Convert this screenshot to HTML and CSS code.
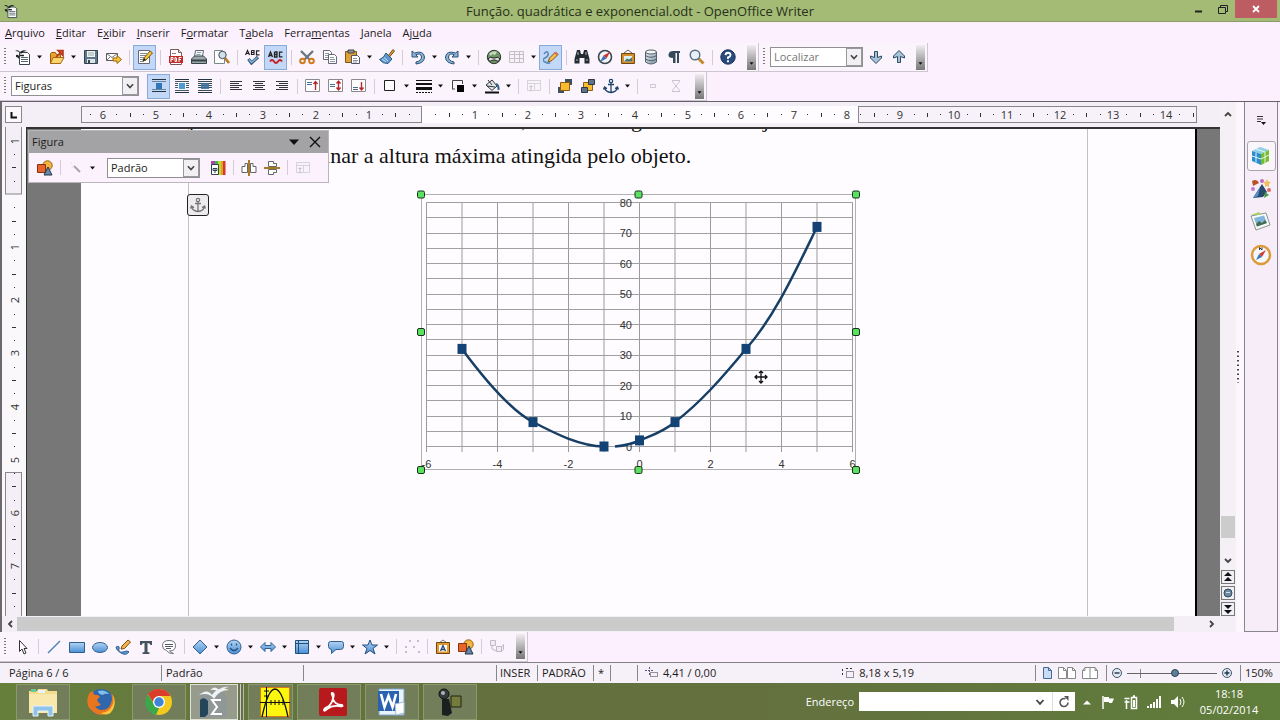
FILE: index.html
```html
<!DOCTYPE html>
<html lang="pt-BR">
<head>
<meta charset="utf-8">
<title>Função. quadrática e exponencial.odt - OpenOffice Writer</title>
<link rel="stylesheet" href="styles.css">
</head>
<body>
<svg class="sprite" aria-hidden="true">
  <defs>
    <linearGradient id="blue" x1="0" y1="0" x2="0" y2="1"><stop offset="0" stop-color="#b4d4f2"/><stop offset="1" stop-color="#4a8fd6"/></linearGradient>
    <linearGradient id="metal" x1="0" y1="0" x2="1" y2="1"><stop offset="0" stop-color="#e9eef2"/><stop offset="1" stop-color="#7a93a8"/></linearGradient>
  </defs>
  <symbol id="dd" viewBox="0 0 11 16"><path d="M3 6.500h5l-2.500 3z" fill="#111"/></symbol>
  <symbol id="chev" viewBox="0 0 16 16"><path d="M4.500 6 8 9.800 11.500 6" fill="none" stroke="#444" stroke-width="1.800"/></symbol>
  <symbol id="new" viewBox="0 0 16 16"><path d="M4.500 3.500h8l2 2v10h-10z" fill="#fff" stroke="#38444c"/><path d="M6 8.500h7M6 10.500h7M6 12.500h7" stroke="#56646c"/><path d="M5 6.500h4" stroke="#222" stroke-width="1.500"/><path d="M0 2q3-2 5 1 3-3 7-1-4 0-6 3-2-3-6-3zM1 6q2-1 3 1v3q-1-2-3-2z" fill="#20282c"/></symbol>
  <symbol id="open" viewBox="0 0 16 16"><path d="M1.500 14.500v-10l1-1h4l1 2h4v9z" fill="#e8a52c" stroke="#9a5c10"/><path d="M1.500 14.500 4 8.500h11l-3.500 6z" fill="#fbd46b" stroke="#a8681a"/><path d="M7 8 12 3M9 1.500h5v5z" stroke="#b5391c" stroke-width="1.600" fill="#dc5c2c"/></symbol>
  <symbol id="save" viewBox="0 0 16 16"><path d="M1.500 1.500h13v13h-13z" fill="#5f7889" stroke="#34444f"/><path d="M4 2h8v6H4z" fill="#eef4f2"/><path d="M5 4h6M5 6h6" stroke="#9aa"/><path d="M4 10h8v4H4z" fill="#dfe6ea"/><path d="M5 11h2v3H5z" fill="#34444f"/></symbol>
  <symbol id="mail" viewBox="0 0 16 16"><path d="M.5 4.500h11v7H.5z" fill="#fff" stroke="#5a5a5a"/><path d="m.5 4.500 5.500 4 5.500-4M.5 11.500 4 8" fill="none" stroke="#777"/><path d="M7 9h4V6.500L15.500 10.500 11 14.500V12H7z" fill="#f8c63c" stroke="#9a6410"/></symbol>
  <symbol id="edit" viewBox="0 0 16 16"><path d="M1.500 1.500h11v13h-11z" fill="#fff" stroke="#667"/><path d="M3 4.500h7M3 6.500h6M3 8.500h5M3 10.500h3M3 12.500h4" stroke="#7a8a98"/><path d="m6 12 1-3 6-7 2.500 2-6.500 7z" fill="#f6c63c" stroke="#7a5610"/><path d="m6 12 1-3 2 2z" fill="#222"/></symbol>
  <symbol id="pdf" viewBox="0 0 16 16"><path d="M2.500.5h8l3 3v12h-11z" fill="#fff" stroke="#7a5a5a"/><path d="M10.500.5v3h3" fill="#ddd" stroke="#7a5a5a"/><rect x="1" y="7" width="14" height="7" fill="#c22d2a"/><path d="M3 13V8.500h2v2H3M7 8.500v4h1.500V9zM11 13V8.500h2.500M11 10.500h2" fill="none" stroke="#fff"/><path d="M4 4.500h4" stroke="#a77"/></symbol>
  <symbol id="print" viewBox="0 0 16 16"><path d="M4.500 1.500h8l-1 6h-8z" fill="#f4f6f7" stroke="#667"/><path d="M6 3.500h4M5.500 5.500h4" stroke="#8aa"/><path d="m.5 10 3-3h9l3 3v4.500H.5z" fill="#9aa7ad" stroke="#39444a"/><path d="M1 10.500h14v2H1z" fill="#39444a"/></symbol>
  <symbol id="preview" viewBox="0 0 16 16"><path d="M.5 1.500h8l2 2v11H.5z" fill="#fff" stroke="#788"/><circle cx="8.500" cy="6" r="3.700" fill="#cfe2ea" stroke="#445"/><path d="m11 9 4 5" stroke="#b57a28" stroke-width="2.600"/></symbol>
  <symbol id="spell" viewBox="0 0 16 16"><path d="M.5 6 2.500 1.500 4.500 6M1 4.500h3M6.500 1.500v4h2.500v-2H7M9 3.500v-2H6.500M14.500 1.800H11.500v4h3" fill="none" stroke="#222" stroke-width="1.200"/><path d="m3.500 10 3 4L13 8" fill="none" stroke="#31577a" stroke-width="3.200"/><path d="m4 10.500 2.500 3 6-5" fill="none" stroke="#86b4da" stroke-width="1.400"/></symbol>
  <symbol id="auto" viewBox="0 0 16 16"><path d="M.5 8 2.500 3 4.500 8M1 6.500h3M6.500 3v5H9V5.500H7M9 5.500V3H6.500M14.500 3.200H11.500v4.600h3" fill="none" stroke="#222" stroke-width="1.300"/><path d="M2 12.500q2-3 4 0t4 0 4 0" fill="none" stroke="#c3202a" stroke-width="2"/></symbol>
  <symbol id="cut" viewBox="0 0 16 16"><path d="M2 2 11 11M14 2 5 11" stroke="#6a7680" stroke-width="2.400"/><circle cx="3.500" cy="12" r="2.300" fill="none" stroke="#d07a22" stroke-width="2"/><circle cx="12.500" cy="12" r="2.300" fill="none" stroke="#d07a22" stroke-width="2"/></symbol>
  <symbol id="copy" viewBox="0 0 16 16"><path d="M1.500 1.500h6l2 2v7h-8z" fill="#fff" stroke="#667"/><path d="M3 4.500h4M3 6.500h4M3 8.500h3" stroke="#8a98a4"/><path d="M6.500 5.500h6l2 2v7h-8z" fill="#fff" stroke="#667"/><path d="M8 8.500h4M8 10.500h5M8 12.500h5" stroke="#8a98a4"/></symbol>
  <symbol id="paste" viewBox="0 0 16 16"><path d="M.5 2.500h11v11H.5z" fill="#e0a033" stroke="#80551a"/><path d="M3 1h6v3H3z" fill="#8a949a" stroke="#444"/><path d="M6.500 6.500h6l2 2v6h-8z" fill="#fff" stroke="#556"/><path d="M8 9.500h4M8 11.500h5M8 13h4" stroke="#8a98a4"/></symbol>
  <symbol id="brush" viewBox="0 0 16 16"><path d="m9 7 5-6.500L15.500 2 10.500 8z" fill="#e09a3c" stroke="#7a4d14"/><path d="m7 4 6 6-4 4.500Q4 15 .5 10.500 5 9 7 4z" fill="#5e95cf" stroke="#2b557f"/><path d="m3 10 4 3M5 8.500l4 3.500" stroke="#cfe4f8"/></symbol>
  <symbol id="undo" viewBox="0 0 16 16"><path d="M2 2v6h6L5.800 5.800Q11 3.500 11.500 8q0 4-5.500 5v2q8.500-1 8.500-7Q13.500 1 4.500 4z" fill="#8db4d8" stroke="#2c5278"/></symbol>
  <symbol id="redo" viewBox="0 0 16 16"><path d="M14 2v6H8l2.200-2.200Q5 3.500 4.500 8q0 4 5.500 5v2Q1.500 14 1.500 8 2.500 1 11.500 4z" fill="#8db4d8" stroke="#2c5278"/></symbol>
  <symbol id="globe" viewBox="0 0 16 16"><circle cx="8" cy="8" r="6.700" fill="#6f9468" stroke="#29382b"/><path d="M3 5q4-4 8-2l-2 3-3-1-1 2z" fill="#c6dabb"/><path d="M2 10q2-3 5-1h2q3-2 5 1-1 3-3 2l-2-1H7l-2 1q-2 1-3-2z" fill="#dde2df" stroke="#222"/></symbol>
  <symbol id="table" viewBox="0 0 16 16"><path d="M.5 2.500h14v11H.5zM.5 5.500h14M.5 9.500h14M5.500 2.500v11M10.500 2.500v11" fill="#f6f2f8" stroke="#c5c0c8"/></symbol>
  <symbol id="draw" viewBox="0 0 16 16"><path d="M1 5q3-4 4-1t-3 5 0 4 5 .5" fill="none" stroke="#5587bd" stroke-width="1.500"/><path d="m5 13 1.500-4 6-6L15 5.500 9 11.500z" fill="#f4bd50" stroke="#7d5318"/><path d="m12.500 2.500 2.500 2.500-1.500 1.500L11 4z" fill="#d8705c"/></symbol>
  <symbol id="find" viewBox="0 0 16 16"><path d="M3 1h3l1 4h2l1-4h3l2.500 9v4.500h-5V9H5.500v5.500h-5V10z" fill="#252b30"/><path d="M2 11h2M12 11h2M4 3v3M12 3v3" stroke="#7d8a94" stroke-width="1.500"/></symbol>
  <symbol id="compass" viewBox="0 0 16 16"><circle cx="8" cy="8" r="6.500" fill="#f2f5f8" stroke="#3c464e" stroke-width="1.600"/><path d="m13 3-3.500 6.500-3-3z" fill="#cf2f2b"/><path d="m3 13 3.500-6.500 3 3z" fill="#3a70b5"/></symbol>
  <symbol id="gallery" viewBox="0 0 16 16"><path d="m4 4 4-3 4 3" fill="none" stroke="#665"/><path d="M1.500 4.500h13v10h-13z" fill="#d28f2b" stroke="#6e4712"/><path d="M4 7h8v5.500H4z" fill="#dfeef2"/><path d="m4 12.500 3-3 2 1 3-2v4z" fill="#4c7466"/></symbol>
  <symbol id="db" viewBox="0 0 16 16"><path d="M2.500 3v10q5.500 4 11 0V3" fill="url(#metal)" stroke="#555e64"/><ellipse cx="8" cy="3" rx="5.500" ry="2" fill="#f2f5f6" stroke="#555e64"/><path d="M2.500 6.500q5.500 3.500 11 0M2.500 10q5.500 3.500 11 0" fill="none" stroke="#555e64"/></symbol>
  <symbol id="pilcrow" viewBox="0 0 16 16"><path d="M7 9Q2 9 2.500 5.500 3 2 7 2h7v2h-1v10h-2V4H9.500v10H7z" fill="#35495a"/></symbol>
  <symbol id="zoom" viewBox="0 0 16 16"><path d="m9.500 9.500 5 5" stroke="#c18a2d" stroke-width="3"/><circle cx="6" cy="6" r="4.800" fill="#e6f0f8" stroke="#5b6f80" stroke-width="1.400"/></symbol>
  <symbol id="help" viewBox="0 0 16 16"><circle cx="8" cy="8" r="7.200" fill="#284a7c" stroke="#18305a"/><path d="M5.500 6.200Q5.700 3.700 8 3.700t2.500 2.200Q10.500 7.500 8 8.500V10M8 11.300v1.900" fill="none" stroke="#fff" stroke-width="1.900"/></symbol>
  <symbol id="down" viewBox="0 0 16 16"><path d="M6.500 2.500h3v6l4-1.500v2L8 14.500 2.500 9V7l4 1.500z" fill="#a8c2d8" stroke="#2c4a66"/></symbol>
  <symbol id="up" viewBox="0 0 16 16"><path d="M6.500 13.500h3v-6l4 1.500V7L8 1.500 2.500 7v2l4-1.500z" fill="#a8c2d8" stroke="#2c4a66"/></symbol>
  <symbol id="wrap-off" viewBox="0 0 16 16"><path d="M1 1.500h14M1 13.500h14" stroke="#234"/><path d="M1 3.500h14M1 11.500h14" stroke="#67829c"/><path d="M5 5h6v6H5z" fill="#2f78b8"/></symbol>
  <symbol id="wrap-page" viewBox="0 0 16 16"><path d="M1 1.500h14M1 14.500h14" stroke="#234"/><path d="M1 3.500h14M1 5.500h3M12 5.500h3M1 7.500h3M12 7.500h3M1 9.500h3M12 9.500h3M1 12.500h14" stroke="#4a5a68"/><path d="M5 5h6v6H5z" fill="#4f9ad2"/></symbol>
  <symbol id="wrap-thr" viewBox="0 0 16 16"><path d="M1 1.500h14M1 14.500h14" stroke="#234"/><path d="M1 3.500h14M1 5.500h14M1 7.500h14M1 9.500h14M1 12.500h14" stroke="#3c4a58"/><path d="M4 5h8v6H4z" fill="#3a6e9c" opacity=".85"/></symbol>
  <symbol id="al" viewBox="0 0 16 16"><path d="M2 3.500h12M2 5.500h9M2 7.500h12M2 9.500h9M2 11.500h12" stroke="#34343a"/></symbol>
  <symbol id="ac" viewBox="0 0 16 16"><path d="M2 3.500h12M4 5.500h8M2 7.500h12M4 9.500h8M2 11.500h12" stroke="#34343a"/></symbol>
  <symbol id="ar" viewBox="0 0 16 16"><path d="M2 3.500h12M5 5.500h9M2 7.500h12M5 9.500h9M2 11.500h12" stroke="#34343a"/></symbol>
  <symbol id="va-t" viewBox="0 0 16 16"><path d="M.5 1.500h14v12H.5z" fill="#fff" stroke="#8a8a90"/><path d="M2 4.500h5M2 6.500h5" stroke="#447098"/><path d="M10.500 12V4M8.500 6l2-2.500 2 2.500" fill="none" stroke="#b5282c" stroke-width="1.400"/></symbol>
  <symbol id="va-m" viewBox="0 0 16 16"><path d="M.5 1.500h14v12H.5z" fill="#fff" stroke="#8a8a90"/><path d="M2 6.500h5M2 8.500h5" stroke="#447098"/><path d="M10.500 12V3M8.500 5.500l2-2.500 2 2.500M8.500 9.500l2 2.500 2-2.500" fill="none" stroke="#b5282c" stroke-width="1.400"/></symbol>
  <symbol id="va-b" viewBox="0 0 16 16"><path d="M.5 1.500h14v12H.5z" fill="#fff" stroke="#8a8a90"/><path d="M2 9.500h5M2 11.500h5" stroke="#447098"/><path d="M10.500 4v7M8.500 9.500l2 2.500 2-2.500" fill="none" stroke="#b5282c" stroke-width="1.400"/></symbol>
  <symbol id="box" viewBox="0 0 16 16"><path d="M2.500 2.500h10v10h-10z" fill="#fff" stroke="#222"/></symbol>
  <symbol id="lines" viewBox="0 0 16 16"><path d="M0 2.500h16" stroke="#111"/><path d="M0 6h16" stroke="#111" stroke-width="2"/><path d="M0 10.500h16" stroke="#111" stroke-width="3"/><path d="M0 14.500h16" stroke="#111" stroke-dasharray="2 1"/></symbol>
  <symbol id="lcolor" viewBox="0 0 16 16"><path d="M2.500 11V2.500h10V6M2 11h3" fill="none" stroke="#444"/><path d="M7 7h7v7H7z" fill="#050505"/></symbol>
  <symbol id="fill" viewBox="0 0 16 16"><path d="m2 7 6-5 5 6-5 4.500z" fill="#dfe8ee" stroke="#333"/><path d="m3 8 8 1M4 2l4 5" stroke="#333"/><path d="M12 6q3 1 2.500 6" stroke="#38658f" stroke-width="2" fill="none"/><path d="M1 14.500h14" stroke="#111" stroke-width="2"/></symbol>
  <symbol id="prop" viewBox="0 0 16 16"><path d="M1.500 2.500h13v10h-13zM1.500 5.500h13M8.500 5.500v7" fill="#f8f2fa" stroke="#d8d2db"/><path d="M5 7.500v6M3.500 8.500h3" stroke="#c4bec8"/></symbol>
  <symbol id="front" viewBox="0 0 16 16"><path d="M8 1h7v6H8z" fill="#40505e"/><path d="M1 9h6v6H1z" fill="#40505e"/><path d="M3.500 4.500h9v8h-9z" fill="#f8bc2e" stroke="#8c5c10"/></symbol>
  <symbol id="back" viewBox="0 0 16 16"><path d="M3.500 4.500h9v8h-9z" fill="#f8bc2e" stroke="#8c5c10"/><path d="M8.500 1.500h6v5h-6zM1.500 9.500h6v5h-6z" fill="#607488" stroke="#2c3945"/></symbol>
  <symbol id="anchor" viewBox="0 0 16 16"><circle cx="8" cy="3" r="1.700" fill="none" stroke="currentColor" stroke-width="1.200"/><path d="M8 5v9M5 6.500h6M1.500 9.500q1 4.500 6.500 5 5.500-.5 6.500-5M.5 11.500l1-2.500 2.500 1.500M15.500 11.500l-1-2.500-2.500 1.500" fill="none" stroke="currentColor" stroke-width="1.300"/></symbol>
  <symbol id="frames" viewBox="0 0 16 16"><path d="M5.500 6.500h5v3h-5z" fill="none" stroke="#cfc8d2"/></symbol>
  <symbol id="unlink" viewBox="0 0 16 16"><path d="m4 3 8 10M12 3 4 13M4 2.500h8M4 13.500h8" stroke="#ccc5cf"/></symbol>
  <symbol id="arrow" viewBox="0 0 16 16"><path d="M4.500 1.500v11l2.500-2.500 2 5 2-1-2-4.500H12z" fill="#fff" stroke="#333"/></symbol>
  <symbol id="line" viewBox="0 0 16 16"><path d="M2 14 14 2" stroke="#4a83b8" stroke-width="1.400"/></symbol>
  <symbol id="rect" viewBox="0 0 16 16"><path d="M.5 3.500h15v10H.5z" fill="url(#blue)" stroke="#2f6090"/></symbol>
  <symbol id="ell" viewBox="0 0 16 16"><ellipse cx="8" cy="8.500" rx="7.500" ry="5" fill="url(#blue)" stroke="#2f6090"/></symbol>
  <symbol id="free" viewBox="0 0 16 16"><path d="M1 8q4-2 3 2t4 3q5-2 6 0-3 4-8 1T1 8z" fill="#5c99d8" stroke="#2f6090"/><path d="m6 10 1-3 6-6 2.500 2-6 6.500z" fill="#f3b548" stroke="#7c4d14"/></symbol>
  <symbol id="tee" viewBox="0 0 16 16"><path d="M2 2h12v4h-1.500Q12 4 9.500 4v9l2 .5V15h-7v-1.500l2-.5V4Q4 4 3.500 6H2z" fill="#46535e"/></symbol>
  <symbol id="call" viewBox="0 0 16 16"><path d="M8 1.500q6.500 0 6.500 5.200T8.500 12q2 2 4 2.500-5 .5-7-3Q1.500 10.500 1.500 6.700 1.500 1.500 8 1.500z" fill="#fff" stroke="#6b7177"/><path d="M4 5.500h8M4 7.500h8M5 9.500h5" stroke="#565c62"/></symbol>
  <symbol id="diam" viewBox="0 0 16 16"><path d="m8 1 7 7-7 7-7-7z" fill="url(#blue)" stroke="#2f6090"/></symbol>
  <symbol id="smile" viewBox="0 0 16 16"><circle cx="8" cy="8" r="7" fill="url(#blue)" stroke="#2f6090"/><path d="M4 9q4 5 8 0M5.500 4.500v2M10.500 4.500v2" fill="none" stroke="#24507c" stroke-width="1.300"/></symbol>
  <symbol id="dbl" viewBox="0 0 16 16"><path d="m.5 8 4.500-4.500v3h6v-3L15.500 8 11 12.500v-3H5v3z" fill="url(#blue)" stroke="#2f6090"/></symbol>
  <symbol id="flow" viewBox="0 0 16 16"><path d="M1.500 1.500h13v13h-13z" fill="url(#blue)" stroke="#20507c"/><path d="M4.500 1.500v13M1.500 4.500h13" stroke="#20507c"/></symbol>
  <symbol id="ball" viewBox="0 0 16 16"><path d="M2.500 2.500h11q2 0 2 2v3q0 3-3 3H8l-4.500 4v-4Q.5 10 .5 7.500v-3q0-2 2-2z" fill="url(#blue)" stroke="#2f6090"/></symbol>
  <symbol id="star" viewBox="0 0 16 16"><path d="m8 1 2 5h5.500L11 9.500l2 5.500-5-3.500L3 15l2-5.500L.5 6H6z" fill="url(#blue)" stroke="#24507c"/></symbol>
  <symbol id="pts" viewBox="0 0 16 16"><path d="M1 7h2v2H1zM1 12h2v2H1zM5 1h2v2H5zM9 7h2v2H9zM13 1h2v2h-2zM14 12h2v2h-2z" fill="#c6bec9"/></symbol>
  <symbol id="fontw" viewBox="0 0 16 16"><path d="m4 4 4-3 4 3" fill="none" stroke="#777"/><path d="M1.500 3.500h13v11h-13z" fill="#e59a30" stroke="#6e4712"/><path d="M4 6h8v6.500H4z" fill="#fff"/><path d="M5.500 12 8 6.500l2.500 5.500M6.500 10.500h3" fill="none" stroke="#23457a" stroke-width="1.300"/></symbol>
  <symbol id="shapes" viewBox="0 0 16 16"><circle cx="10.500" cy="5.500" r="4.700" fill="#f3b540" stroke="#956114"/><path d="M.5 4.500h8v8h-8z" fill="#e5662a" stroke="#8a3010"/><path d="m11 7 4 8H7z" fill="#6688aa" stroke="#233448"/></symbol>
  <symbol id="extr" viewBox="0 0 16 16"><path d="M1.500 1.500h5v5h-5zM7.500 7.500h5v5h-5zM12.500 7.500l2-2v5l-2 2M3 7v3l4 2" fill="#f1ebf3" stroke="#c2bbc5"/></symbol>
  <symbol id="wand" viewBox="0 0 16 16"><path d="m6 6 6 6" stroke="#aaa2ae" stroke-width="2"/><path d="M3 3h1M4 7h1" stroke="#e0d8e4"/></symbol>
  <symbol id="colors" viewBox="0 0 16 16"><path d="M1 1h4v4H1z" fill="#b43fb4"/><path d="M5 1h10v14H5z" fill="#43b64a"/><path d="M10 1h5v14h-5z" fill="#e5a022"/><path d="M13 1h2.500v14H13z" fill="#d33"/><path d="M8 1h3v14H8z" fill="#b9dd30"/><path d="M1.500 4.500h7v10h-7z" fill="#fff" stroke="#345"/><path d="M5 8v5M3 8.500h4v2H3z" stroke="#345" fill="none"/></symbol>
  <symbol id="fliph" viewBox="0 0 16 16"><path d="M1 6.500h3V3.500h2.500v9H1zM15 6.500h-3V3.500H9.500v9H15z" fill="#fff" stroke="#666"/><path d="M8 0v16" stroke="#a47b28" stroke-width="2"/></symbol>
  <symbol id="flipv" viewBox="0 0 16 16"><path d="M4.500 6.500v-5h5v2h3v3zM4.500 9.500v5h5v-2h3v-3z" fill="#fff" stroke="#666"/><path d="M0 8h16" stroke="#a47b28" stroke-width="2"/></symbol>
  <symbol id="sheet" viewBox="0 0 9 12"><path d="M.5.500h5l3 3v8h-8z" fill="inherit" stroke="currentColor"/><path d="M5.500.500v3h3" fill="none" stroke="currentColor"/></symbol>
</svg>

<div class="app">
  <header class="title">
    <svg class="ico" aria-hidden="true"><use href="#new"/></svg>
    <h1>Função. quadrática e exponencial.odt - OpenOffice Writer</h1>
    <div class="winbtns">
      <button aria-label="Minimizar"><svg width="12" height="12"><path d="M2 8.500h7" stroke="#222" stroke-width="2"/></svg></button>
      <button aria-label="Restaurar"><svg width="12" height="12"><path d="M1.500 4.500h7v6h-7zM3.500 4V2.500h7v6H9" fill="none" stroke="#222"/></svg></button>
      <button class="close" aria-label="Fechar"><svg width="12" height="12"><path d="m3 3 6 6M9 3 3 9" stroke="#fff" stroke-width="1.800"/></svg></button>
    </div>
  </header>

  <nav class="menu">
    <button><u>A</u>rquivo</button><button><u>E</u>ditar</button><button>E<u>x</u>ibir</button><button><u>I</u>nserir</button><button>F<u>o</u>rmatar</button><button>T<u>a</u>bela</button><button>Ferra<u>m</u>entas</button><button><u>J</u>anela</button><button>Aj<u>u</u>da</button>
  </nav>

  <div class="bars">
    <div class="bar" role="toolbar" aria-label="Padrão">
      <i class="grip"></i>
      <button class="b" aria-label="Novo"><svg><use href="#new"/></svg></button><button class="d" aria-label="Mais"><svg><use href="#dd"/></svg></button>
      <button class="b" aria-label="Abrir"><svg><use href="#open"/></svg></button><button class="d" aria-label="Mais"><svg><use href="#dd"/></svg></button>
      <button class="b" aria-label="Salvar"><svg><use href="#save"/></svg></button><button class="b" aria-label="E-mail"><svg><use href="#mail"/></svg></button><i class="sep"></i>
      <button class="b on" aria-label="Editar arquivo"><svg><use href="#edit"/></svg></button><i class="sep"></i>
      <button class="b" aria-label="PDF"><svg><use href="#pdf"/></svg></button><button class="b" aria-label="Imprimir"><svg><use href="#print"/></svg></button><button class="b" aria-label="Visualizar"><svg><use href="#preview"/></svg></button><i class="sep"></i>
      <button class="b" aria-label="Ortografia"><svg><use href="#spell"/></svg></button><button class="b on" aria-label="AutoVerificação"><svg><use href="#auto"/></svg></button><i class="sep"></i>
      <button class="b" aria-label="Cortar"><svg><use href="#cut"/></svg></button><button class="b" aria-label="Copiar"><svg><use href="#copy"/></svg></button><button class="b" aria-label="Colar"><svg><use href="#paste"/></svg></button><button class="d" aria-label="Mais"><svg><use href="#dd"/></svg></button><button class="b" aria-label="Pincel"><svg><use href="#brush"/></svg></button><i class="sep"></i>
      <button class="b" aria-label="Desfazer"><svg><use href="#undo"/></svg></button><button class="d" aria-label="Mais"><svg><use href="#dd"/></svg></button><button class="b" aria-label="Refazer"><svg><use href="#redo"/></svg></button><button class="d" aria-label="Mais"><svg><use href="#dd"/></svg></button><i class="sep"></i>
      <button class="b" aria-label="Hiperlink"><svg><use href="#globe"/></svg></button><button class="b" aria-label="Tabela" disabled><svg><use href="#table"/></svg></button><button class="d" aria-label="Mais"><svg><use href="#dd"/></svg></button><button class="b on" aria-label="Desenho"><svg><use href="#draw"/></svg></button><i class="sep"></i>
      <button class="b" aria-label="Localizar"><svg><use href="#find"/></svg></button><button class="b" aria-label="Navegador"><svg><use href="#compass"/></svg></button><button class="b" aria-label="Galeria"><svg><use href="#gallery"/></svg></button><button class="b" aria-label="Fontes de dados"><svg><use href="#db"/></svg></button><button class="b" aria-label="Caracteres não imprimíveis"><svg><use href="#pilcrow"/></svg></button><button class="b" aria-label="Zoom"><svg><use href="#zoom"/></svg></button><i class="sep"></i>
      <button class="b" aria-label="Ajuda"><svg><use href="#help"/></svg></button>
      <button class="more" aria-label="Opções da barra"><svg><use href="#dd"/></svg></button>
    </div>
    <div class="bar search" role="toolbar" aria-label="Localizar">
      <i class="grip"></i>
      <div class="combo find"><input type="text" placeholder="Localizar" aria-label="Localizar"><button aria-label="Abrir lista"><svg><use href="#chev"/></svg></button></div>
      <button class="b" aria-label="Próximo"><svg><use href="#down"/></svg></button><button class="b" aria-label="Anterior"><svg><use href="#up"/></svg></button>
      <button class="more" aria-label="Opções da barra"><svg><use href="#dd"/></svg></button>
    </div>
  </div>

  <div class="bars">
    <div class="bar" role="toolbar" aria-label="Quadro">
      <i class="grip"></i>
      <div class="combo style"><input type="text" value="Figuras" aria-label="Estilo"><button aria-label="Abrir lista"><svg><use href="#chev"/></svg></button></div>
      <button class="b on" aria-label="Sem quebra"><svg><use href="#wrap-off"/></svg></button><button class="b" aria-label="Quebra de página"><svg><use href="#wrap-page"/></svg></button><button class="b" aria-label="Através"><svg><use href="#wrap-thr"/></svg></button><i class="sep"></i>
      <button class="b" aria-label="Esquerda"><svg><use href="#al"/></svg></button><button class="b" aria-label="Centro"><svg><use href="#ac"/></svg></button><button class="b" aria-label="Direita"><svg><use href="#ar"/></svg></button><i class="sep"></i>
      <button class="b" aria-label="Topo"><svg><use href="#va-t"/></svg></button><button class="b" aria-label="Meio"><svg><use href="#va-m"/></svg></button><button class="b" aria-label="Base"><svg><use href="#va-b"/></svg></button><i class="sep"></i>
      <button class="b" aria-label="Bordas"><svg><use href="#box"/></svg></button><button class="d" aria-label="Mais"><svg><use href="#dd"/></svg></button>
      <button class="b" aria-label="Estilo de linha"><svg><use href="#lines"/></svg></button><button class="d" aria-label="Mais"><svg><use href="#dd"/></svg></button>
      <button class="b" aria-label="Cor da linha"><svg><use href="#lcolor"/></svg></button><button class="d" aria-label="Mais"><svg><use href="#dd"/></svg></button>
      <button class="b" aria-label="Cor do plano de fundo"><svg><use href="#fill"/></svg></button><button class="d" aria-label="Mais"><svg><use href="#dd"/></svg></button><i class="sep"></i>
      <button class="b" aria-label="Propriedades" disabled><svg><use href="#prop"/></svg></button><i class="sep"></i>
      <button class="b" aria-label="Para frente"><svg><use href="#front"/></svg></button><button class="b" aria-label="Para trás"><svg><use href="#back"/></svg></button><button class="b navy" aria-label="Âncora"><svg><use href="#anchor"/></svg></button><button class="d" aria-label="Mais"><svg><use href="#dd"/></svg></button><i class="sep"></i>
      <button class="b" aria-label="Vincular" disabled><svg><use href="#frames"/></svg></button><button class="b" aria-label="Desvincular" disabled><svg><use href="#unlink"/></svg></button>
      <button class="more" aria-label="Opções da barra"><svg><use href="#dd"/></svg></button>
    </div>
  </div>

  <main class="work">
    <section class="editor">
      <div class="hrow">
        <button class="corner" aria-label="Tabulação"><svg width="8" height="8"><path d="M1.500 1v5.500H7" fill="none" stroke="#111" stroke-width="2"/></svg></button>
        <svg class="hruler" id="hruler" aria-label="Régua horizontal"></svg>
      </div>
      <svg class="vruler" id="vruler" aria-label="Régua vertical"></svg>
      <div class="view">
        <article class="page">
          <div class="textarea">
            <p class="cut" aria-hidden="true"><span>p</span><span>,</span><span>g</span><span>j</span></p>
            <p class="text">determinar a altura máxima atingida pelo objeto.</p>
            <svg class="chart" id="chart" viewBox="415 188 448 290" width="448" height="290" role="img" aria-label="Gráfico da função"></svg>
          </div>
          <span class="anchor"><svg width="16" height="16"><use href="#anchor"/></svg></span>
        </article>
        <div class="float" role="toolbar" aria-label="Figura">
          <div class="fhead"><span>Figura</span>
            <button aria-label="Menu"><svg width="12" height="12"><path d="M1 3.500h10L6 9z" fill="#111"/></svg></button>
            <button aria-label="Fechar"><svg width="12" height="12"><path d="m1 1 10 10M11 1 1 11" stroke="#111" stroke-width="1.400"/></svg></button></div>
          <div class="fbody">
            <button class="b" aria-label="Da galeria"><svg><use href="#shapes"/></svg></button><i class="sep"></i>
            <button class="b" aria-label="Filtro" disabled><svg><use href="#wand"/></svg></button><button class="d" aria-label="Mais"><svg><use href="#dd"/></svg></button>
            <div class="combo mode"><input type="text" value="Padrão" aria-label="Modo gráfico"><button aria-label="Abrir lista"><svg><use href="#chev"/></svg></button></div>
            <button class="b" aria-label="Cor"><svg><use href="#colors"/></svg></button><i class="sep"></i>
            <button class="b" aria-label="Inverter horizontalmente"><svg><use href="#fliph"/></svg></button><button class="b" aria-label="Inverter verticalmente"><svg><use href="#flipv"/></svg></button><i class="sep"></i>
            <button class="b" aria-label="Propriedades" disabled><svg><use href="#prop"/></svg></button>
          </div>
        </div>
      </div>
      <div class="vscroll">
        <button aria-label="Acima"><svg width="12" height="12"><path d="M3 8 6 5l3 3" fill="none" stroke="#444" stroke-width="1.800"/></svg></button>
        <div class="vtrack"><i></i></div>
        <button aria-label="Abaixo"><svg width="12" height="12"><path d="m3 4 3 3 3-3" fill="none" stroke="#444" stroke-width="1.800"/></svg></button>
        <button class="nav" aria-label="Página anterior"><svg width="12" height="12"><path d="m6 1 4 4H2zM6 6l4 4H2z" fill="#111"/></svg></button>
        <button class="nav" aria-label="Navegação"><svg width="12" height="12"><circle cx="6" cy="6" r="4" fill="#6d8aa5" stroke="#33475a"/><path d="M4 5.500h4" stroke="#cde"/></svg></button>
        <button class="nav" aria-label="Próxima página"><svg width="12" height="12"><path d="m6 6 4-4H2zM6 11l4-4H2z" fill="#111"/></svg></button>
      </div>
      <div class="hscroll">
        <button aria-label="Esquerda"><svg width="12" height="12"><path d="M8 3 5 6l3 3" fill="none" stroke="#444" stroke-width="1.800"/></svg></button>
        <div class="htrack"><i></i></div>
        <button aria-label="Direita"><svg width="12" height="12"><path d="m4 3 3 3-3 3" fill="none" stroke="#444" stroke-width="1.800"/></svg></button>
      </div>
    </section>
    <div class="split"><svg width="4" height="32"><path d="M2 0v32" stroke="#444" stroke-width="2" stroke-dasharray="1.500 3"/></svg></div>
    <aside class="side">
      <button aria-label="Menu lateral"><svg width="14" height="14" viewBox="0 0 14 14"><path d="M3 3.500h6M3 6h6M3 8.500h4" stroke="#333"/><path d="M7 9h5l-2.500 3z" fill="#111"/></svg></button>
      <button class="sel" aria-label="Propriedades"><svg width="22" height="22" viewBox="0 0 22 22"><path d="m2 6 8-4 9 3-8 4z" fill="#8ed0e8"/><path d="m2 6 9 3v11l-9-4z" fill="#2b8dd0"/><path d="m11 9 8-4v11l-8 4z" fill="#79bd2c"/><path d="m2 11 9 3 8-4M6 7.500v10M15 7v11M6 4l9 3" stroke="#e2f5ee" fill="none"/></svg></button>
      <button aria-label="Estilos"><svg width="22" height="22" viewBox="0 0 22 22"><path d="M2 3q5-3 7 2L3 8z" fill="#b6532b"/><circle cx="12" cy="3" r="2" fill="#c16ac4"/><path d="m17 1 1 2.500 3 .5-2 2v3l-2-1-2 1V6l-2-2 3-.5z" fill="#f4bd5b"/><circle cx="3" cy="11" r="2" fill="#bd80cf"/><circle cx="19" cy="12" r="2" fill="#dc6965"/><path d="m12 6 5 8-4 5-10 1z" fill="#2a4a6c"/><path d="m10 9-2 9-5 2z" fill="#5591c8"/><path d="m15 14 4 3-5 3z" fill="#4a9650"/></svg></button>
      <button aria-label="Galeria"><svg width="22" height="22" viewBox="0 0 22 22"><path d="m1 5 15-3 4 12-14 5z" fill="#fafafa" stroke="#89958c"/><path d="m4 7 10-2.500L17 12 7 15.500z" fill="#80b5de"/><path d="m6 13 3-3 3 2 3-3 2 3-10 3.500z" fill="#446d4f"/><path d="m1 4 8-3 2 3" fill="#a4d06a"/></svg></button>
      <button aria-label="Navegador"><svg width="22" height="22" viewBox="0 0 22 22"><circle cx="11" cy="11" r="9" fill="#f4f8fb" stroke="#dd9a3a" stroke-width="2.500"/><path d="m16 6-4 7-3-3z" fill="#cf3b2d"/><path d="m6 16 3-6 3 3z" fill="#3877b9"/><path d="M9.500 6V3.500l2.500 2.500V3.500" fill="none" stroke="#333"/></svg></button>
    </aside>
  </main>

  <div class="bars low">
    <div class="bar" role="toolbar" aria-label="Desenho">
      <i class="grip"></i>
      <button class="b" aria-label="Selecionar"><svg><use href="#arrow"/></svg></button><i class="sep"></i>
      <button class="b" aria-label="Linha"><svg><use href="#line"/></svg></button><button class="b" aria-label="Retângulo"><svg><use href="#rect"/></svg></button><button class="b" aria-label="Elipse"><svg><use href="#ell"/></svg></button><button class="b" aria-label="Mão livre"><svg><use href="#free"/></svg></button><button class="b" aria-label="Texto"><svg><use href="#tee"/></svg></button><button class="b" aria-label="Texto explicativo"><svg><use href="#call"/></svg></button><i class="sep"></i>
      <button class="b" aria-label="Formas básicas"><svg><use href="#diam"/></svg></button><button class="d" aria-label="Mais"><svg><use href="#dd"/></svg></button>
      <button class="b" aria-label="Símbolos"><svg><use href="#smile"/></svg></button><button class="d" aria-label="Mais"><svg><use href="#dd"/></svg></button>
      <button class="b" aria-label="Setas"><svg><use href="#dbl"/></svg></button><button class="d" aria-label="Mais"><svg><use href="#dd"/></svg></button>
      <button class="b" aria-label="Fluxogramas"><svg><use href="#flow"/></svg></button><button class="d" aria-label="Mais"><svg><use href="#dd"/></svg></button>
      <button class="b" aria-label="Balões"><svg><use href="#ball"/></svg></button><button class="d" aria-label="Mais"><svg><use href="#dd"/></svg></button>
      <button class="b" aria-label="Estrelas"><svg><use href="#star"/></svg></button><button class="d" aria-label="Mais"><svg><use href="#dd"/></svg></button><i class="sep"></i>
      <button class="b" aria-label="Pontos" disabled><svg><use href="#pts"/></svg></button><i class="sep"></i>
      <button class="b" aria-label="Fontwork"><svg><use href="#fontw"/></svg></button><button class="b" aria-label="De arquivo"><svg><use href="#shapes"/></svg></button><i class="sep"></i>
      <button class="b" aria-label="Extrusão" disabled><svg><use href="#extr"/></svg></button>
      <button class="more" aria-label="Opções da barra"><svg><use href="#dd"/></svg></button>
    </div>
  </div>

  <footer class="status">
    <span class="s-page">Página 6 / 6</span><span class="s-style">Padrão</span><span class="s-lang"></span><span class="s-ins">INSER</span><span class="s-sel">PADRÃO</span><span class="s-mod">*</span><span class="s-sig"></span>
    <span class="s-pos"><svg width="14" height="12"><path d="M4.500 0v8M0 3.500h9" stroke="#557" stroke-dasharray="2 1"/><path d="M5.500 5.500h7v4h-7z" fill="none" stroke="#334" stroke-dasharray="1 1"/></svg>4,41 / 0,00<svg class="size" width="14" height="12"><path d="M1.500 2v8M5 1.500h8" stroke="#334" stroke-dasharray="2 2"/><path d="M5.500 4.500h7v6h-7z" fill="none" stroke="#334" stroke-dasharray="1 1"/></svg>8,18 x 5,19</span>
    <span class="s-view"><svg class="lit" width="9" height="12"><use href="#sheet"/></svg><span class="pair"><svg width="9" height="12"><use href="#sheet"/></svg><svg width="9" height="12"><use href="#sheet"/></svg></span><svg width="16" height="12"><path d="M.5 3.500 3 .500h5v11H.500zM8 .500h5l2.500 3v8H8M3 .500v3H.500M13 .500v3h2.500" fill="#fff" stroke="#888"/></svg></span>
    <span class="s-zoom"><svg width="12" height="12"><circle cx="6" cy="6" r="4.500" fill="#dfeaf8" stroke="#456"/><path d="M3.500 6h5" stroke="#234" stroke-width="1.400"/></svg><input type="range" min="0" max="100" value="54" aria-label="Zoom"><svg width="12" height="12"><circle cx="6" cy="6" r="4.500" fill="#dfeaf8" stroke="#456"/><path d="M3.500 6h5M6 3.500v5" stroke="#234" stroke-width="1.400"/></svg></span>
    <span class="s-pct">150%</span>
  </footer>

  <div class="task">
    <button class="t" aria-label="Explorador"><svg width="32" height="32" viewBox="0 0 32 32"><path d="M2 5h8l1-2h9l1 2h9v21H2z" fill="#f4dc8c"/><path d="M4 3h5v3H4z" fill="#6c9" /><path d="M11 4h7v3h-7z" fill="#e9f3fb"/><path d="M2 8h28v19H2z" fill="#f9e8ae"/><path d="M6 30V20h20v10h-5v-5H11v5z" fill="#8ec3ea" stroke="#e6f3fb"/></svg></button>
    <button class="t bare" aria-label="Firefox"><svg width="30" height="30" viewBox="0 0 30 30"><circle cx="15" cy="15" r="13" fill="#2f66ae"/><path d="M12 4q7-2 11 3-5-1-6 1-5-1-5-4z" fill="#7fc0e8"/><path d="M3 7q-4 9 1 15t12 6q9-1 12-9 2-8-3-13 2 6 0 10-2 7-9 7-5 0-7-4 4 1 6-2-3-1-4-4 1-2 3-3-2-3-5-2-2-1-2-4-3 1-4 3z" fill="#e8761e"/><path d="M26 7q4 9-3 16-4 3-8 3 9 5 13-6 2-8-2-13z" fill="#f9c43c"/></svg></button>
    <button class="t" aria-label="Chrome"><svg width="30" height="30" viewBox="0 0 30 30"><circle cx="15" cy="15" r="13" fill="#f4c81d"/><path d="M15 2a13 13 0 0 1 11.500 7H15l-6 6-5-7.500A13 13 0 0 1 15 2z" fill="#da3d2c"/><path d="M4 7.500 11 19l4 2-3 7A13 13 0 0 1 4 7.500z" fill="#3ba84c"/><circle cx="15" cy="15" r="6" fill="#fff"/><circle cx="15" cy="15" r="4.700" fill="#3d85d8"/></svg></button>
    <button class="t active" aria-label="OpenOffice"><svg width="34" height="32" viewBox="0 0 34 32"><path d="M3 6h22l5 5v20H3z" fill="#8e959b" opacity=".75"/><path d="M3 14q4-4 8 1v13l-3 3H3z" fill="#23465a"/><path d="M2 9q8-7 13 0Q22-1 32 4q-10 0-15 9-5-7-15-4zM13 4q5-5 9 0 4-4 10-3-7 1-10 6-3-4-9-3z" fill="#eef2f4"/><path d="M24 14h-9l5 7-5 7h10" fill="none" stroke="#fff" stroke-width="2"/></svg></button>
    <button class="t narrow" aria-label="Gráfico"><svg width="30" height="30" viewBox="0 0 30 30"><path d="M.5.500h29v29H.500z" fill="#fdf710" stroke="#d8791c"/><path d="M6.500 0v30M0 15.500h30M11 13v5M15 13v5M19 13v5M23 13v5M4 4h5M4 9h5" stroke="#111"/><path d="M2 30Q8 2 15 2t13 28" fill="none" stroke="#111" stroke-width="1.300"/></svg></button>
    <button class="t wide" aria-label="Adobe Reader"><svg width="28" height="28" viewBox="0 0 28 28"><rect width="28" height="28" rx="2" fill="#b8191c"/><path d="M13 5q3 0 1 6 2 6 9 6 2 2-3 1-7-1-12 3-3 3-3 1 0-2 5-4 4-4 4-9-2-4-1-4z" fill="none" stroke="#fff" stroke-width="1.800"/></svg></button>
    <button class="t" aria-label="Word"><svg width="30" height="30" viewBox="0 0 30 30"><path d="M2 2h25v26H2z" fill="#eaf2fa" stroke="#7ba6d2"/><path d="M1 4h21v20H1z" fill="#2b62b0"/><path d="m4 7 3.500 13L11.500 9l4 11L19 7" fill="none" stroke="#fff" stroke-width="2.600"/><path d="m18 17 9-2v11l-8 2z" fill="#fff" stroke="#a9bdd2"/></svg></button>
    <button class="t" aria-label="Gravador"><svg width="30" height="30" viewBox="0 0 30 30"><circle cx="9" cy="7" r="5" fill="#343a3c" stroke="#111"/><circle cx="8" cy="6" r="2" fill="#a9b4b8"/><path d="M7 12h7l3 14-4 3-6-1z" fill="#1c1f20"/><path d="M16 9h10v11H16z" fill="#737b3d" stroke="#202516"/></svg></button>
    <label class="addr" for="addr">Endereço</label>
    <div class="addrbox"><input id="addr" type="text"><button aria-label="Abrir lista"><svg width="16" height="16"><use href="#chev"/></svg></button><button class="go" aria-label="Atualizar"><svg width="14" height="14"><path d="M11 7.500A4 4 0 1 1 8.500 3.800" fill="none" stroke="#555" stroke-width="1.600"/><path d="M7 1h4.500v5z" fill="#555"/></svg></button></div>
    <div class="tray">
      <svg width="10" height="8"><path d="M1 6.500h8L5 2.500z" fill="#fff"/></svg>
      <svg width="14" height="16"><path d="M2 2v13" stroke="#fff" stroke-width="1.500"/><path d="M3 3h5v1.500h5L11 9H8V8H3z" fill="#fff"/></svg>
      <svg width="14" height="16"><path d="M7.500 3.500h5v11h-5zM9 2h2M2.500 6v9M.5 4.500h5M.5 8h5" fill="none" stroke="#fff" stroke-width="1.500"/><path d="M9 6h2v7H9z" fill="#fff"/></svg>
      <svg width="14" height="16"><path d="M1 14v-2M4 14v-4M7 14V8M10 14V5M13 14V2" stroke="#fff" stroke-width="2"/></svg>
      <svg width="15" height="16"><path d="M1 6h3l4-4v12l-4-4H1z" fill="#fff"/><path d="M10 5q2 3 0 6M12 3q4 5 0 10" fill="none" stroke="#fff"/></svg>
    </div>
    <time class="clock"><span>18:18</span><span>05/02/2014</span></time>
  </div>
</div>
<script src="app.js"></script>
</body>
</html>
```
FILE: styles.css
```css
* { box-sizing: border-box; }
body {
  margin: 0;
  font: 11px/16px "Open Sans", "Noto Sans", sans-serif;
  color: #1c1c20;
  background: #fcf0fe;
}
button, input { font: inherit; color: inherit; border: 0; padding: 0; margin: 0; background: none; }
button { display: flex; align-items: center; justify-content: center; flex: none; }
svg { display: block; flex: none; }
.sprite { position: absolute; width: 0; height: 0; }

.app { display: grid; grid-template-rows: 22px 21px 29px 29px 1fr 30px 21px 37px; height: 100vh; overflow: hidden; }

/* title bar */
.title { display: grid; grid-template-columns: 84px 1fr 84px; align-items: center; background: #a4bb75; border-bottom: 1px solid #8b9c66; }
.title .ico { width: 14px; height: 16px; margin-left: 4px; }
.title h1 { margin: 0; font-size: 13px; line-height: 20px; font-weight: 400; text-align: center; color: #26301a; white-space: nowrap; }
.winbtns { display: flex; align-self: start; justify-content: flex-end; padding-right: 3px; }
.winbtns button { width: 24px; height: 18px; }
.winbtns .close { width: 42px; background: #bd5c63; }

/* menu */
.menu { display: flex; align-items: center; gap: 11px; padding-left: 5px; }

/* toolbars */
.bars { display: flex; }
.bar { display: flex; align-items: center; height: 29px; padding-right: 2px; background: #fbf4fd; border-right: 1px solid #cdc6d0; border-bottom: 1px solid #cdc6d0; }
.grip { flex: none; width: 2px; height: 18px; margin: 0 5px 0 4px; background: repeating-linear-gradient(#777 0 1px, transparent 1px 3px); }
.b { width: 23px; height: 25px; }
.b svg { width: 16px; height: 16px; }
.d { width: 11px; height: 25px; }
.d svg { width: 11px; height: 16px; }
.on { background: #c2d8f6; border: 1px solid #86aada; }
.navy { color: #20466e; }
.sep { flex: none; width: 1px; height: 15px; margin: 0 3px 0 4px; background: #d3ccd6; }
.more { width: 9px; height: 25px; margin-left: 8px; align-items: flex-end; background: linear-gradient(#f0ecf1, #777); }
.more svg { width: 11px; height: 13px; }
.combo { display: flex; align-items: center; height: 20px; background: #fff; border: 1px solid #8f8f94; }
.combo input { flex: 1; min-width: 0; padding-left: 3px; }
.combo button { width: 16px; height: 18px; border: 1px solid #99989d; background: #f3f0f4; }
.combo svg { width: 14px; height: 14px; }
.style { width: 128px; margin-right: 8px; }
.find { width: 93px; margin-right: 1px; }
.find input::placeholder { color: #777; opacity: 1; }
.search .more { margin-left: 6px; }

/* work area */
.work { display: grid; grid-template-columns: 1fr 9px 35px; min-height: 0; border-top: 1px solid #66616a; }
.editor { display: grid; grid-template-columns: 26px 1fr 16px; grid-template-rows: 25px 1fr 16px; min-width: 0; min-height: 0; border-left: 2px solid #6b686e; background: #f4eff6; }
.hrow { grid-column: 1 / 3; display: flex; align-items: center; min-width: 0; }
.corner { width: 17px; height: 17px; margin-left: 3px; border: 1px solid #88858b; background: #fbf9fc; }
.hruler { flex: 1; min-width: 0; height: 25px; overflow: hidden; }
.vruler { width: 24px; height: 100%; min-height: 0; background: #fbf8fc; overflow: hidden; }
.hruler text, .vruler text { font: 11px "Open Sans", "Noto Sans", sans-serif; fill: #333; text-anchor: middle; }
.view { position: relative; overflow: hidden; min-width: 0; min-height: 0; padding: 0 23px 0 54px; background: #777; border-left: 1px solid #333; border-top: 2px solid #333; margin-left: -2px; }
.page { position: relative; height: 100%; padding: 0 107px; background: #fefcff; border-right: 2px solid #000; overflow: hidden; }
.textarea { height: 100%; border: solid #c4c1c6; border-width: 0 1px; }
.textarea p { margin: 0; font: 22px/38px "Liberation Serif", serif; color: #111; white-space: nowrap; }
.textarea .cut { display: grid; grid: 3px / 332px 110px 132px 20px; align-items: end; overflow: hidden; line-height: 24px; margin-bottom: 5px; }
.textarea .text { padding-left: 74px; }
.chart { margin: 13px 0 0 226px; }
.chart text { font: 11px "Liberation Sans", sans-serif; fill: #333; }
.anchor { position: absolute; left: 106px; top: 65px; display: grid; place-items: center; width: 22px; height: 22px; background: #eeebef; border: 1px solid #222; border-radius: 3px; color: #777; }

.float { position: absolute; left: 1px; top: 1px; width: 301px; background: #fbf2fd; border: 1px solid #bbb6bd; }
.fhead { display: flex; align-items: center; gap: 9px; height: 22px; padding: 0 7px 0 3px; background: #a3a2a4; }
.fhead span { flex: 1; }
.fbody { display: flex; align-items: center; height: 29px; padding-left: 4px; }
.mode { width: 93px; margin: 0 6px 0 9px; }

.vscroll { display: flex; flex-direction: column; align-items: center; grid-row: 1 / 3; grid-column: 3; padding-top: 4px; background: #f4f0f6; }
.vscroll button { width: 14px; height: 15px; }
.vtrack { flex: 1; display: flex; flex-direction: column; padding-bottom: 15px; }
.vtrack i { width: 14px; height: 22px; margin-top: auto; background: #cdcccd; }
.vscroll .nav { height: 14px; margin-top: 2px; background: #eef0f6; border: 1px solid #777; }
.hscroll { grid-column: 1 / -1; display: flex; align-items: center; padding-right: 17px; }
.hscroll button { width: 15px; height: 14px; }
.htrack { flex: 1; padding-right: 30px; }
.htrack i { display: block; height: 14px; background: #cccbcc; }
.split { display: flex; align-items: center; background: #fbf7fc; border-right: 1px solid #88858b; }
.side { display: flex; flex-direction: column; align-items: center; gap: 3px; padding-top: 8px; margin-right: 2px; background: #f6edf8; border: solid #88858b; border-width: 0 1px 1px 0; }
.side button { width: 29px; height: 30px; }
.side button:first-child { height: 20px; margin-bottom: 8px; }
.side .sel { border: 1px solid #aaa5ad; border-radius: 3px; background: #faf4fb; }

.low .bar { height: 30px; }

/* status bar */
.status { display: flex; align-items: center; border-top: 1px solid #858288; background: #f6f0f8; white-space: nowrap; }
.status > span { display: flex; align-items: center; height: 16px; padding: 0 4px; border-left: 1px solid #88858b; flex: none; }
.status > .s-page { width: 161px; padding-left: 9px; border: 0; }
.status > .s-style { width: 142px; }
.status > .s-lang { width: 193px; }
.status > .s-ins { width: 41px; padding: 0 3px; }
.status > .s-sel { width: 56px; }
.status > .s-mod { width: 17px; }
.status > .s-sig { width: 27px; }
.status > .s-pos { flex: 1; padding-left: 7px; }
.s-pos svg { margin-right: 4px; }
.s-pos .size { margin-left: 125px; }
.status > .s-view { width: 71px; gap: 6px; padding: 0 7px; color: #888; fill: #fff; }
.s-view .lit { fill: #c8dcf4; color: #456a9a; }
.pair { display: flex; }
.status > .s-zoom { width: 134px; justify-content: space-between; padding-right: 7px; }
.s-zoom input { appearance: none; width: 90px; height: 12px; background: linear-gradient(#666, #666) center / 100% 1px no-repeat, linear-gradient(#888, #888) 13px center / 1px 9px no-repeat; }
.s-zoom input::-webkit-slider-thumb { appearance: none; width: 8px; height: 8px; border-radius: 4px; background: #5d7e98; border: 1px solid #2c4456; }
.status > .s-pct { width: 40px; }

/* task bar */
.task { display: flex; align-items: center; padding-left: 16px; background: linear-gradient(90deg, #66803c, #64713f 30%, #64713f 60%, #5f7d3b); color: #fff; white-space: nowrap; }
.t { width: 54px; height: 36px; margin-right: 4px; border: 1px solid #8b9a6c; background: #727d59; }
.t.bare { border-color: transparent; background: none; }
.t.active { width: 48px; margin-right: 10px; border-color: #dfe3d5; background: #969b8c; box-shadow: 2px 0 #66704e, 3px 0 #cbd1be, 5px 0 #66704e, 6px 0 #b5bba6; }
.t.narrow { width: 45px; padding-left: 8px; }
.t.wide { width: 64px; padding-left: 8px; }
.addr { margin-left: auto; padding-right: 5px; }
.addrbox { display: flex; align-items: center; width: 216px; height: 19px; background: #fff; color: #111; }
.addrbox input { flex: 1; min-width: 0; }
.addrbox .go { width: 23px; height: 19px; margin-left: 4px; border-left: 1px solid #ddd; }
.tray { display: flex; align-items: center; gap: 9px; padding: 0 14px 0 7px; }
.clock { display: flex; flex-direction: column; align-items: center; width: 60px; margin-right: 21px; }
```
FILE: app.js
```js
const NS = 'http://www.w3.org/2000/svg';

function add(parent, tag, attrs, text) {
  const el = document.createElementNS(NS, tag);
  for (const key in attrs) el.setAttribute(key, attrs[key]);
  if (text !== undefined) el.textContent = text;
  parent.appendChild(el);
  return el;
}

const UNIT = 53.15;
const EDGE = '#88858b';

function drawHorizontal() {
  const svg = document.getElementById('hruler');
  const zero = 400;
  add(svg, 'rect', { x: 59.5, y: 4.5, width: 340, height: 16, fill: '#f7f1f9', stroke: EDGE });
  add(svg, 'rect', { x: 400, y: 4, width: 436, height: 17, fill: '#fefcff' });
  add(svg, 'rect', { x: 836.5, y: 4.5, width: 338, height: 16, fill: '#f7f1f9', stroke: EDGE });
  for (let q = -25; q <= 58; q++) {
    const x = Math.round(zero + q * UNIT / 4);
    if (q === 0) continue;
    if (q % 4 === 0) add(svg, 'text', { x, y: 17 }, Math.abs(q / 4));
    else add(svg, 'rect', { x, y: q % 2 ? 12 : 11, width: 1, height: q % 2 ? 1 : 4, fill: '#333' });
  }
}

function drawVertical() {
  const svg = document.getElementById('vruler');
  const zero = 67;
  const end = svg.getBoundingClientRect().height;
  add(svg, 'rect', { x: 3.5, y: -4, width: 16, height: 71, fill: '#f4eef6', stroke: EDGE });
  add(svg, 'rect', { x: 3.5, y: 345.5, width: 16, height: 400, fill: '#f4eef6', stroke: EDGE });
  for (let q = -4; zero + q * UNIT / 4 < end - 6; q++) {
    const y = Math.round(zero + q * UNIT / 4);
    if (q === 0) continue;
    if (q % 4 === 0) add(svg, 'text', { transform: `translate(17 ${y}) rotate(-90)` }, Math.abs(q / 4));
    else add(svg, 'rect', { x: q % 2 ? 12 : 10, y, width: q % 2 ? 1 : 4, height: 1, fill: '#333' });
  }
}

function drawChart() {
  const svg = document.getElementById('chart');
  const px = v => 639.5 + v * 35.5;
  const py = v => 446.5 - v * 3.05;
  add(svg, 'rect', { x: 421.5, y: 194.5, width: 434, height: 275, fill: 'none', stroke: '#b3b0b5' });
  for (let x = -6; x <= 6; x++) add(svg, 'path', { d: `M${px(x)} ${py(80)}V452`, stroke: '#9b9b9e' });
  for (let y = 0; y <= 80; y += 5) add(svg, 'path', { d: `M${px(-6)} ${Math.floor(py(y)) + 0.5}H${px(6)}`, stroke: '#a0a0a3' });
  for (let y = 0; y <= 80; y += 10) add(svg, 'text', { x: 632, y: py(y) + 4, 'text-anchor': 'end' }, y);
  for (let x = -6; x <= 6; x += 2) add(svg, 'text', { x: px(x), y: 468, 'text-anchor': 'middle' }, x);
  add(svg, 'path', {
    d: 'M462 349C485 380 510 410 533 422S580 446 604 446.500M615 446.500C625 445.500 632 444 639.500 440.500S662 433 675 422C700 403 722 378 746 349C775 316 795 272 817 227',
    fill: 'none', stroke: '#173f66', 'stroke-width': 2.5,
  });
  for (const [x, y] of [[-5, 32], [-3, 8], [-1, 0], [0, 2], [1, 8], [3, 32], [5, 72]]) {
    add(svg, 'rect', { x: px(x) - 4.5, y: py(y) - 5, width: 9, height: 10, fill: '#134275' });
  }
  for (const x of [421, 638.5, 856]) {
    for (const y of [194.5, 332, 470]) {
      if (x === 638.5 && y === 332) continue;
      add(svg, 'rect', { x: x - 3.5, y: y - 3.5, width: 7, height: 7, rx: 1.5, fill: '#5be062', stroke: '#17331a' });
    }
  }
  const move = 'M755 377H767M761 371V383M757 375L755 377L757 379M765 375L767 377L765 379M759 373L761 371L763 373M759 381L761 383L763 381';
  add(svg, 'path', { d: move, fill: 'none', stroke: '#fff', 'stroke-width': 3 });
  add(svg, 'path', { d: move, fill: 'none', stroke: '#111', 'stroke-width': 1.3 });
}

drawHorizontal();
drawVertical();
drawChart();
```
